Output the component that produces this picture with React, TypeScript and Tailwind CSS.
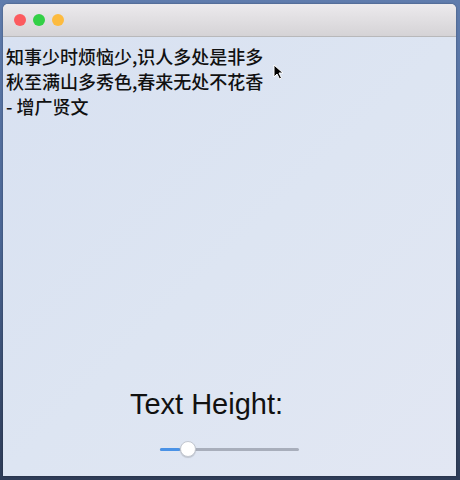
import React from 'react';

const lines = ['知事少时烦恼少,识人多处是非多', '秋至满山多秀色,春来无处不花香', '- 增广贤文'];

const App = () => {
  const [value] = React.useState(20);

  return (
    <div className="w-[460px] h-[480px] overflow-hidden bg-gradient-to-b from-[#5f7cad] via-[#4a6593] to-[#2e3c57] pt-[4px] pl-[3px]">
      <div className="w-[453px] h-[472px] flex flex-col rounded-t-[5px] overflow-hidden bg-[#dbe3f1] shadow-[0_0_2px_rgba(0,0,0,0.4)]">
        <div className="h-[33px] shrink-0 flex items-center gap-[7px] pl-[11px] bg-gradient-to-b from-[#eceaed] to-[#d5d3d6] border-b border-[#b8b8ba]">
          <span className="w-[12px] h-[12px] rounded-full bg-[#fc5b5f]" />
          <span className="w-[12px] h-[12px] rounded-full bg-[#33d046]" />
          <span className="w-[12px] h-[12px] rounded-full bg-[#fdbb3f]" />
        </div>
        <div className="relative flex-1 flex flex-col bg-gradient-to-br from-[#d8e1f1] via-[#dde5f2] to-[#e2e7f3]">
          <div className="pt-[7px] pl-[3px] text-[18px] leading-[25px] font-medium text-[#111] [font-family:'Noto_Sans_CJK_SC',sans-serif]">
            {lines.map((l) => (
              <div key={l}>{l}</div>
            ))}
          </div>
          <svg className="absolute left-[270px] top-[27px]" width="12" height="16" viewBox="0 0 12 16">
            <path d="M1 1 L1 13 L4 10 L6.5 15 L8.5 14 L6 9 L10 9 Z" fill="#000" stroke="#fff" strokeWidth="1" />
          </svg>
          <div className="mt-auto mb-[19px] flex flex-col items-center">
            <div className="mr-[46px] text-[29px] leading-[32px] text-[#111] [font-family:'Liberation_Sans',sans-serif]">
              Text Height:
            </div>
            <div className="relative mt-[21px] w-[139px] h-[16px] flex items-center">
              <div className="w-full h-[3px] rounded-full bg-[#a8aebb]" />
              <div className="absolute left-0 h-[3px] rounded-full bg-[#4a92e6]" style={{ width: `${value}px` }} />
              <div className="absolute left-[20px] w-[16px] h-[16px] rounded-full bg-white border border-[#c3c8d1] shadow-[0_1px_1px_rgba(0,0,0,0.15)]" />
            </div>
          </div>
        </div>
      </div>
    </div>
  );
};

export default App;
